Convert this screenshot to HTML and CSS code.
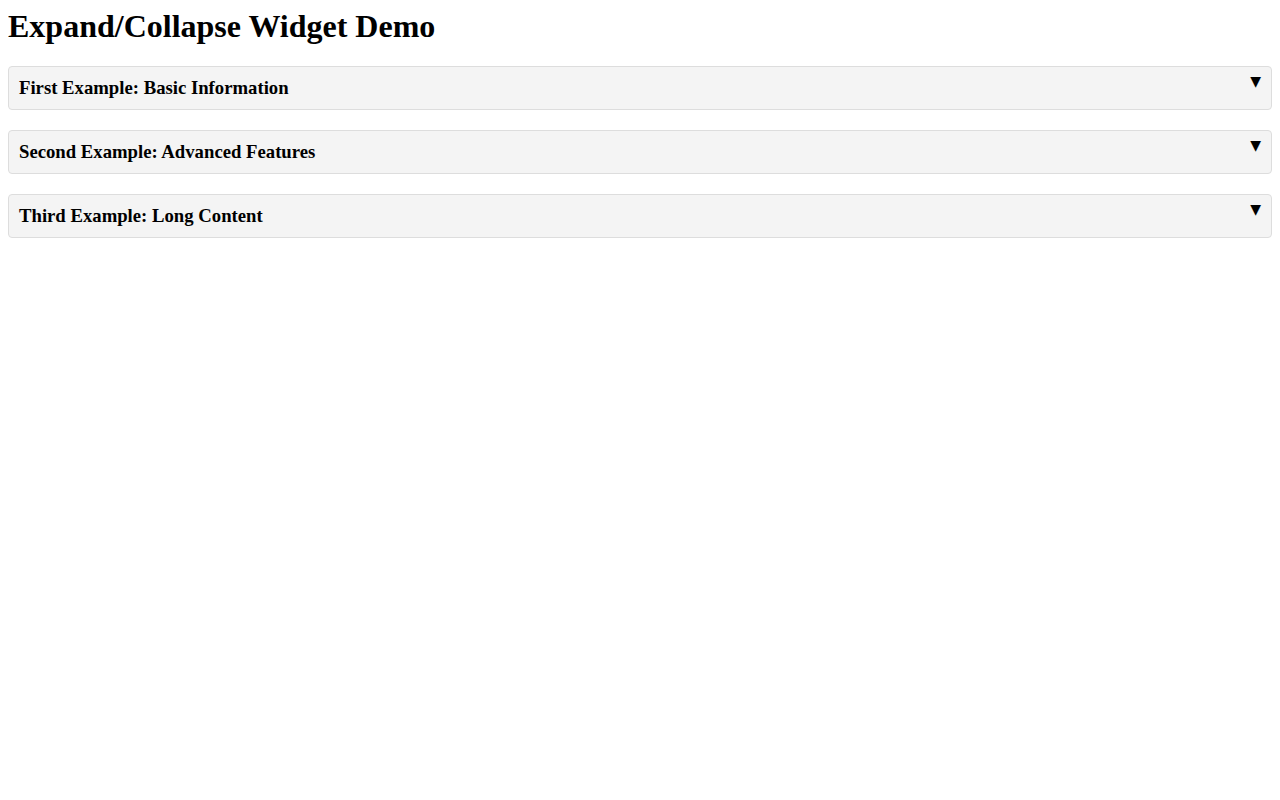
FILE: index.html
```html
<!DOCTYPE html>
<html>
<head>
<meta charset="utf-8">
<title>Expand/Collapse Widget Demo</title>
<link rel="stylesheet" href="styles.css">
</head>
<body>
<h1 class="title">Expand/Collapse Widget Demo</h1>
<div class="widget">
  <h3 class="widget-header">First Example: Basic Information<span class="arrow">▼</span></h3>
</div>
<div class="widget">
  <h3 class="widget-header">Second Example: Advanced Features<span class="arrow">▼</span></h3>
</div>
<div class="widget">
  <h3 class="widget-header">Third Example: Long Content<span class="arrow">▼</span></h3>
</div>
</body>
</html>
```
FILE: styles.css
```css
body {
  margin: 8px;
  font-family: "Liberation Serif", "Times New Roman", serif;
  color: #000;
  background: #fff;
}
.title {
  font-size: 32px;
  font-weight: bold;
  margin: 0 0 21.44px 0;
}
.widget {
  border: 1px solid #dddddd;
  border-radius: 4px;
  margin-bottom: 20px;
  background: #f4f4f4;
}
.widget-header {
  position: relative;
  margin: 0;
  padding: 10px;
  font-size: 18.72px;
  font-weight: bold;
}
.arrow {
  position: absolute;
  right: 10px;
  top: 6px;
  font-size: 14px;
  font-family: "DejaVu Sans", sans-serif;
}
```
